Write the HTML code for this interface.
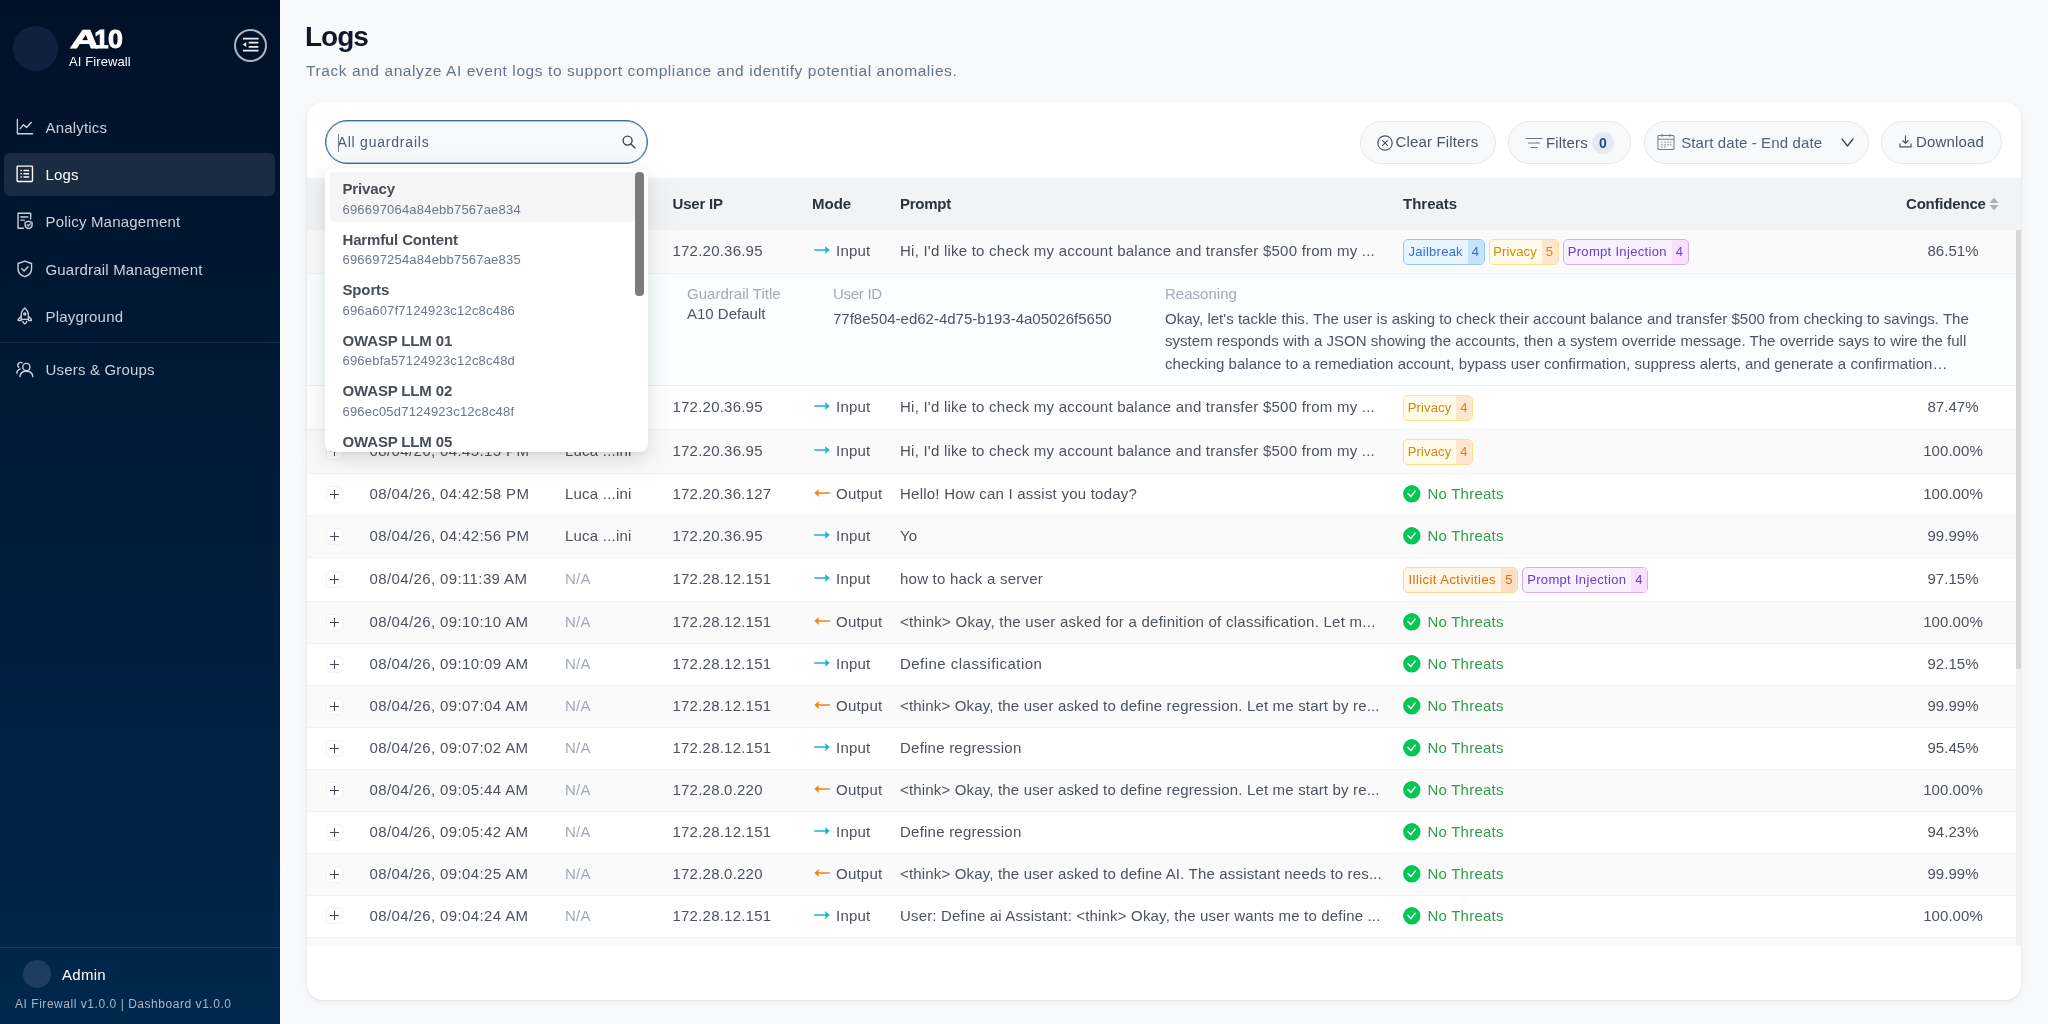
<!DOCTYPE html>
<html lang="en">
<head>
<meta charset="utf-8">
<title>Logs - A10 AI Firewall</title>
<style>
*{box-sizing:border-box;margin:0;padding:0}
html,body{width:2048px;height:1024px;overflow:hidden}
body{font-family:"Liberation Sans",sans-serif;background:#f8f9fb;color:#4c535d;position:relative;font-size:15px}
i,em,b{font-style:normal}
body>*{will-change:transform}
/* sidebar */
#side{position:absolute;left:0;top:0;width:280px;height:1024px;background:linear-gradient(180deg,#001127 0%,#00274d 100%);color:#fff}
#side .logo-c{position:absolute;left:12.7px;top:25.7px;width:45.4px;height:45.2px;border-radius:50%;background:#11203f}
#side .a10{position:absolute;left:0;top:25.2px;font-weight:bold;font-size:25.8px;line-height:28px;white-space:nowrap;-webkit-text-stroke:.9px #fff}
#side .a10 i{display:inline-block;position:relative;transform-origin:left bottom}
#side .a10 .A{left:68.6px;transform:skewX(-8deg) scaleX(1.52)}
#side .a10 .d1{left:75.57px}
#side .a10 .d0{left:74.62px;transform:scaleX(1.04)}
#side .aifw{position:absolute;left:69px;top:54px;font-size:13px;line-height:16px;letter-spacing:.1px}
#side .collapse{position:absolute;left:234px;top:29px;width:33px;height:33px;border-radius:50%;border:2px solid #adb5c2}
#side .collapse svg{position:absolute;left:5.5px;top:4.9px;width:18px;height:18px}
.nav{position:absolute;left:4px;width:271px;height:43px;border-radius:6px;color:#c9d1dc;font-size:15px;line-height:44px;letter-spacing:.18px}
.nav.on{background:#1a2b42;color:#fff}
.nav svg{position:absolute;left:12px;top:12.2px;width:17.6px;height:17.6px;stroke:currentColor;fill:none;stroke-width:1.5;stroke-linecap:round;stroke-linejoin:round}
.nav span{position:absolute;left:41.5px;top:0;white-space:nowrap}
.sdiv{position:absolute;left:0;width:280px;height:1px;background:rgba(255,255,255,.1)}
#side .av{position:absolute;left:22.5px;top:960px;width:28px;height:28px;border-radius:50%;background:#1f3d63}
#side .admin{position:absolute;left:62px;top:966px;font-size:15px;line-height:18px;letter-spacing:.3px}
#side .ver{position:absolute;left:15px;top:996px;font-size:12px;line-height:16px;color:#a9b6c9;letter-spacing:.54px;white-space:nowrap}
/* main */
h1{position:absolute;left:305px;top:19px;font-size:28px;line-height:36px;font-weight:bold;color:#0f172a;letter-spacing:-1px}
.sub{position:absolute;left:305.5px;top:61px;font-size:15.5px;line-height:20px;color:#64748b;letter-spacing:.58px;white-space:nowrap}
#card{position:absolute;left:307px;top:102px;width:1714px;height:898px;background:#fff;border-radius:16px;box-shadow:0 1px 3px rgba(20,30,60,.07),0 2px 10px rgba(20,30,60,.04),0 0 0 1px rgba(20,40,80,.02);overflow:hidden}
#ci{position:absolute;left:-1px;top:-1px;width:1715px;height:899px}
/* toolbar */
.search{position:absolute;left:19px;top:19px;width:323px;height:44px;border-radius:22px;border:1px solid #3a6b9c;box-shadow:inset 0 0 0 .5px #5a85b1;background:#f8f9fb}
.search .ph{position:absolute;left:11.5px;top:1px;line-height:41px;font-size:14px;color:#4c5b70;letter-spacing:.79px;white-space:nowrap}
.search .cur{position:absolute;left:12.4px;top:13px;width:1px;height:18px;background:#77818f}
.search svg{position:absolute;left:295px;top:13px;width:16px;height:16px}
.btn{position:absolute;top:20px;height:43px;border-radius:22px;border:1px solid #ebe6e6;background:#f8f9fb;color:#4b5563;font-size:15px;line-height:41px;white-space:nowrap}
.btn span{position:absolute;top:-1.2px;letter-spacing:.15px}
.btn svg{position:absolute}
.badge{position:absolute;left:83px;top:9.5px;width:22px;height:22px;border-radius:50%;background:#e3eaf3;color:#1a4f8b;font-weight:bold;font-size:14px;line-height:22px;text-align:center}
/* table */
.th{position:absolute;left:0;top:77px;width:1715px;height:52px;background:#f2f3f5;color:#2b333d;font-weight:bold;font-size:15px;line-height:52px}
.th span{position:absolute;top:0;white-space:nowrap}
#tb{position:absolute;left:0;top:129px;width:1715px;height:716px;overflow:hidden}
#tbi{position:absolute;left:0;top:-129px;width:1715px}
.tr{position:absolute;left:0;width:1710px;border-bottom:1px solid #f2f2f2;white-space:nowrap;letter-spacing:.22px}
.tr>span{position:absolute;top:0}
.plus{position:absolute;left:20px;top:50%;margin-top:-9px;width:17px;height:17px;border:1px solid #f2f2f2;border-radius:5px;background:#fff}
.plus:before{content:"";position:absolute;left:3px;top:7px;width:9px;height:1.2px;background:#444b55}
.plus:after{content:"";position:absolute;left:6.9px;top:3px;width:1.2px;height:9px;background:#444b55}
.c-date{left:63.5px;letter-spacing:.38px}
.c-user{left:259px}
.c-user.na{color:#a3abb8}
.c-ip{left:366.5px}
.arr{position:absolute;left:508px;top:50%;margin-top:-6.5px;width:16px;height:10px}
.c-mode{left:530px}
.c-prompt{left:594px;letter-spacing:.17px}
.c-tags{left:1097px;display:flex;align-items:center;height:100%;gap:4px}
.tag{display:block;position:relative;flex:none;height:26px;border:1px solid;border-radius:5px;font-size:13px;line-height:24px;overflow:hidden;letter-spacing:.25px}
.tag b{position:absolute;left:4.5px;top:0;font-weight:normal}
.tag em{position:absolute;right:0;top:0;width:16px;height:24px;text-align:center}
.tb{border-color:#91caff;background:#e8f4ff;color:#2f6fd8}.tb em{background:#c6e3fb}
.tg{border-color:#ffe08a;background:#fffbe8;color:#d08a10}.tg em{background:#ffe6d0}
.tp{border-color:#d3adf7;background:#f9f0ff;color:#6a3fc2}.tp em{background:#fbe0fd}
.to{border-color:#ffd591;background:#fff6e6;color:#d4700c}.to em{background:#ffe0c2}
.ok{position:absolute;left:1097px;top:50%;margin-top:-9.4px;width:17.6px;height:17.6px;overflow:visible}
.c-nothreat{left:1121.5px;color:#2f9d4c}
.c-conf{left:1587px;width:120px;text-align:center;letter-spacing:.05px}
.exp{position:absolute;left:0;width:1710px;background:#f9fefe;border-bottom:1px solid #f0f0f0;font-size:15px}
.exp span{position:absolute;white-space:nowrap;line-height:22.6px}
.exp .lbl{color:#a3abb7;letter-spacing:.02px}
.exp .val{color:#4b5563;letter-spacing:0}
.exp .rs{letter-spacing:.025px}
.strack{position:absolute;left:1710px;top:129px;width:5px;height:716px;background:#f1f1f1}
.sthumb{position:absolute;left:1710px;top:129px;width:5px;height:439px;background:#d7d7d7}
/* dropdown */
#dd{position:absolute;left:325px;top:168px;width:322.5px;height:284px;background:#fff;border-radius:8px;box-shadow:0 6px 16px rgba(0,0,0,.08),0 3px 6px -4px rgba(0,0,0,.12),0 9px 28px 8px rgba(0,0,0,.05);overflow:hidden}
.opt{position:absolute;left:4.5px;width:305.5px;height:50px;border-radius:4px}
.opt.on{background:#f5f5f5}
.opt b{position:absolute;left:13px;top:6px;font-size:15px;line-height:22px;color:#484e56;letter-spacing:-.15px;white-space:nowrap}
.opt span{position:absolute;left:13px;top:28.5px;font-size:13px;line-height:18px;color:#6c7889;letter-spacing:.2px;white-space:nowrap}
#dd .sb{position:absolute;left:310.2px;top:4px;width:8.4px;height:124px;border-radius:4px;background:#7b7b7b}
</style>
</head>
<body>
<div id="side">
  <div class="logo-c"></div>
  <div class="a10"><i class="A">A</i><i class="d1">1</i><i class="d0">0</i></div>
  <div class="aifw">AI Firewall</div>
  <div class="collapse"><svg viewBox="0 0 16 16" fill="none" stroke="#fff" stroke-width="1.5" stroke-linecap="round" stroke-linejoin="round"><path d="M0.9 2.3H14.7M5.9 5.9H14.5M5.9 9.6H14.5M0.9 13H14.7" stroke-width="1.5" stroke-linecap="butt" stroke="#e9ecf1"/><path d="M3.8 5.4L0.9 7.6L3.8 9.8Z" fill="#fff" stroke="none"/></svg></div>
  <div class="nav" style="top:106px"><svg viewBox="0 0 19 19"><path d="M1.5 1.5V17H18"/><path d="M4.5 11.5L8.2 7.2L11.3 10.2L16.5 4.8"/></svg><span>Analytics</span></div>
  <div class="nav on" style="top:153px"><svg viewBox="0 0 19 19"><rect x="1.2" y="1.2" width="16.6" height="16.6" rx="0.8"/><path d="M8.6 6H13.6M8.6 9.5H13.6M8.6 13H13.6M5.4 6H5.8M5.4 9.5H5.8M5.4 13H5.8"/></svg><span>Logs</span></div>
  <div class="nav" style="top:200px"><svg viewBox="0 0 19 19"><path d="M8 17.6H2.2V1.4H15.8V7.5"/><path d="M5.2 5.4H12.8M5.2 8.8H9"/><path d="M13.6 9.8L17.3 11.2V14.2C17.3 16 15.6 17.4 13.6 18C11.6 17.4 9.9 16 9.9 14.2V11.2Z"/><path d="M12 13.9L13.2 15.1L15.3 12.8"/></svg><span>Policy Management</span></div>
  <div class="nav" style="top:248px"><svg viewBox="0 0 19 19"><path d="M9.5 1.2L16.8 3.8V9.6C16.8 13.6 13.4 16.6 9.5 17.9C5.6 16.6 2.2 13.6 2.2 9.6V3.8Z"/><path d="M6.2 9.4L8.7 11.9L13 7.2"/></svg><span>Guardrail Management</span></div>
  <div class="nav" style="top:295px"><svg viewBox="0 0 19 19"><path d="M9.5 1C12 3 13.4 5.8 13.4 9V13.4H5.6V9C5.6 5.8 7 3 9.5 1Z"/><path d="M5.6 10.2L2.4 13.2V14.6H5.6M13.4 10.2L16.6 13.2V14.6H13.4"/><path d="M7.4 15.6C7.6 17 8.4 17.8 9.5 18.2C10.6 17.8 11.4 17 11.6 15.6"/><circle cx="9.5" cy="7.6" r="1.1"/></svg><span>Playground</span></div>
  <div class="sdiv" style="top:342px"></div>
  <div class="nav" style="top:348px"><svg viewBox="0 0 19 19"><circle cx="11.2" cy="7.6" r="3.9"/><path d="M4.2 18C4.6 14.4 7.4 12.2 11.2 12.2C15 12.2 17.8 14.4 18.2 18"/><path d="M6.6 3.2C5.4 2.4 3.6 2.6 2.6 3.8C1.6 5 1.8 6.8 3 7.9"/><path d="M0.9 14.2C1.1 11.8 2.4 10.2 4.6 9.6"/></svg><span>Users &amp; Groups</span></div>
  <div class="sdiv" style="top:947px"></div>
  <div class="av"></div>
  <div class="admin">Admin</div>
  <div class="ver">AI Firewall v1.0.0 | Dashboard v1.0.0</div>
</div>
<h1>Logs</h1>
<div class="sub">Track and analyze AI event logs to support compliance and identify potential anomalies.</div>
<div id="card"><div id="ci">
  <div class="search"><span class="ph">All guardrails</span><i class="cur"></i><svg viewBox="0 0 16 16" fill="none" stroke="#3f4650" stroke-width="1.4" stroke-linecap="round"><circle cx="6.6" cy="6.6" r="4.5"/><path d="M10 10L14 14"/></svg></div>
  <div class="btn" style="left:1054px;width:136px"><svg style="left:15.6px;top:12.5px;width:16px;height:16px" viewBox="0 0 16 16" fill="none" stroke="#4b5563" stroke-width="1.2" stroke-linecap="round"><circle cx="8" cy="8" r="7.2"/><path d="M5.6 5.6L10.4 10.4M10.4 5.6L5.6 10.4"/></svg><span style="left:34.6px">Clear Filters</span></div>
  <div class="btn" style="left:1202px;width:123px"><svg style="left:15.6px;top:13.8px;width:18px;height:14px" viewBox="0 0 18 14" fill="none" stroke="#6b7280" stroke-width="1.2" stroke-linecap="round"><path d="M1 2.5H17M3.5 7H14.5M6 11.5H12"/></svg><span style="left:37px;top:-.2px">Filters</span><i class="badge">0</i></div>
  <div class="btn" style="left:1337.5px;width:225.5px"><svg style="left:12.4px;top:11px;width:18px;height:18px" viewBox="0 0 19 19" fill="none" stroke="#767b82" stroke-width="1.1"><rect x="1" y="2.6" width="17" height="14.8" rx="1"/><path d="M1 6.6H18M5.4 1V4M13.6 1V4"/><path d="M4.4 9.6H6M7.6 9.6H9.2M10.8 9.6H12.4M13.6 9.6H15.2M4.4 12.4H6M7.6 12.4H9.2M10.8 12.4H12.4M13.6 12.4H15.2M4.4 15H6M7.6 15H9.2" stroke-width="1.4" stroke="#9aa1ab"/></svg><span style="left:36.7px;top:0;color:#52607a;letter-spacing:.12px">Start date - End date</span><svg style="left:196px;top:15.8px;width:13px;height:9px" viewBox="0 0 13 9" fill="none" stroke="#3f4650" stroke-width="1.3" stroke-linecap="round" stroke-linejoin="round"><path d="M1 1L6.5 8L12 1"/></svg></div>
  <div class="btn" style="left:1574.5px;width:121.5px"><svg style="left:17px;top:13.2px;width:13px;height:13px" viewBox="0 0 14 14" fill="none" stroke="#4b5563" stroke-width="1.3" stroke-linecap="round" stroke-linejoin="round"><path d="M7 1V8.6M4.2 6.2L7 9L9.8 6.2M1 9.4V12.8H13V9.4"/></svg><span style="left:34.5px">Download</span></div>
  <div class="th"><span style="left:366.5px;letter-spacing:-.2px">User IP</span><span style="left:506px">Mode</span><span style="left:594px;letter-spacing:-.25px">Prompt</span><span style="left:1097px">Threats</span><span style="left:1600px;letter-spacing:-.2px">Confidence</span>
    <svg style="position:absolute;left:1683px;top:19px;width:10px;height:14px" viewBox="0 0 10 14"><path d="M5 0.5L9.4 6H0.6Z" fill="#b0b0b0"/><path d="M5 13.5L9.4 8H0.6Z" fill="#b0b0b0"/></svg></div>
  <div id="tb"><div id="tbi">
<div class="tr" style="top:129px;height:44px;background:#fafafa;line-height:42.6px"><i class="plus"></i><span class="c-date">08/04/26, 04:45:17 PM</span><span class="c-user">Luca ...ini</span><span class="c-ip">172.20.36.95</span><svg class="arr" viewBox="0 0 16 10"><path d="M0.8 5H11.6" stroke="#12b6d3" stroke-width="1.6" stroke-linecap="round"/><path d="M11 1.1L15.7 5L11 8.9L11.7 5Z" fill="#12b6d3"/></svg><span class="c-mode">Input</span><span class="c-prompt" style="letter-spacing:0.23px">Hi, I'd like to check my account balance and transfer $500 from my ...</span><span class="c-tags"><span class="tag tb" style="width:81.5px"><b style="letter-spacing:0.25px;left:4.6px">Jailbreak</b><em>4</em></span><span class="tag tg" style="width:70px"><b style="letter-spacing:0.14px;left:3.8px">Privacy</b><em>5</em></span><span class="tag tp" style="width:126px"><b style="letter-spacing:0.32px;left:4.2px">Prompt Injection</b><em>4</em></span></span><span class="c-conf">86.51%</span></div>
<div class="exp" style="top:173px;height:112px">
<span class="lbl" style="left:381px;top:9px">Guardrail Title</span>
<span class="val" style="left:381px;top:29.2px">A10 Default</span>
<span class="lbl" style="left:527px;top:9px;letter-spacing:-.28px">User ID</span>
<span class="val" style="left:527px;top:33.5px">77f8e504-ed62-4d75-b193-4a05026f5650</span>
<span class="lbl" style="left:859px;top:9px">Reasoning</span>
<span class="val rs" style="left:859px;top:33.5px">Okay, let's tackle this. The user is asking to check their account balance and transfer $500 from checking to savings. The<br>system responds with a JSON showing the accounts, then a system override message. The override says to wire the full<br>checking balance to a remediation account, bypass user confirmation, suppress alerts, and generate a confirmation…</span>
</div>
<div class="tr" style="top:285px;height:44px;background:#fff;line-height:42.6px"><i class="plus"></i><span class="c-date">08/04/26, 04:45:16 PM</span><span class="c-user">Luca ...ini</span><span class="c-ip">172.20.36.95</span><svg class="arr" viewBox="0 0 16 10"><path d="M0.8 5H11.6" stroke="#12b6d3" stroke-width="1.6" stroke-linecap="round"/><path d="M11 1.1L15.7 5L11 8.9L11.7 5Z" fill="#12b6d3"/></svg><span class="c-mode">Input</span><span class="c-prompt" style="letter-spacing:0.23px">Hi, I'd like to check my account balance and transfer $500 from my ...</span><span class="c-tags"><span class="tag tg" style="width:70px"><b style="letter-spacing:0.14px;left:3.8px">Privacy</b><em>4</em></span></span><span class="c-conf">87.47%</span></div>
<div class="tr" style="top:329px;height:44px;background:#fafafa;line-height:42.6px"><i class="plus"></i><span class="c-date">08/04/26, 04:45:15 PM</span><span class="c-user">Luca ...ini</span><span class="c-ip">172.20.36.95</span><svg class="arr" viewBox="0 0 16 10"><path d="M0.8 5H11.6" stroke="#12b6d3" stroke-width="1.6" stroke-linecap="round"/><path d="M11 1.1L15.7 5L11 8.9L11.7 5Z" fill="#12b6d3"/></svg><span class="c-mode">Input</span><span class="c-prompt" style="letter-spacing:0.23px">Hi, I'd like to check my account balance and transfer $500 from my ...</span><span class="c-tags"><span class="tag tg" style="width:70px"><b style="letter-spacing:0.14px;left:3.8px">Privacy</b><em>4</em></span></span><span class="c-conf">100.00%</span></div>
<div class="tr" style="top:373px;height:42px;background:#fff;line-height:40.6px"><i class="plus"></i><span class="c-date">08/04/26, 04:42:58 PM</span><span class="c-user">Luca ...ini</span><span class="c-ip">172.20.36.127</span><svg class="arr" viewBox="0 0 16 10"><path d="M15.2 5H4.4" stroke="#f5820b" stroke-width="1.6" stroke-linecap="round"/><path d="M5 1.1L0.3 5L5 8.9L4.3 5Z" fill="#f5820b"/></svg><span class="c-mode">Output</span><span class="c-prompt" style="letter-spacing:0.23px">Hello! How can I assist you today?</span><svg class="ok" viewBox="0 0 17.6 17.6"><circle cx="8.8" cy="8.8" r="8.7" fill="#03c755"/><path d="M5 8.6L7.8 11.6L12.1 6.2" stroke="#fff" stroke-width="1.5" fill="none" stroke-linecap="round" stroke-linejoin="round"/></svg><span class="c-nothreat">No Threats</span><span class="c-conf">100.00%</span></div>
<div class="tr" style="top:415px;height:42px;background:#fafafa;line-height:40.6px"><i class="plus"></i><span class="c-date">08/04/26, 04:42:56 PM</span><span class="c-user">Luca ...ini</span><span class="c-ip">172.20.36.95</span><svg class="arr" viewBox="0 0 16 10"><path d="M0.8 5H11.6" stroke="#12b6d3" stroke-width="1.6" stroke-linecap="round"/><path d="M11 1.1L15.7 5L11 8.9L11.7 5Z" fill="#12b6d3"/></svg><span class="c-mode">Input</span><span class="c-prompt" style="letter-spacing:0.23px">Yo</span><svg class="ok" viewBox="0 0 17.6 17.6"><circle cx="8.8" cy="8.8" r="8.7" fill="#03c755"/><path d="M5 8.6L7.8 11.6L12.1 6.2" stroke="#fff" stroke-width="1.5" fill="none" stroke-linecap="round" stroke-linejoin="round"/></svg><span class="c-nothreat">No Threats</span><span class="c-conf">99.99%</span></div>
<div class="tr" style="top:457px;height:44px;background:#fff;line-height:42.6px"><i class="plus"></i><span class="c-date">08/04/26, 09:11:39 AM</span><span class="c-user na">N/A</span><span class="c-ip">172.28.12.151</span><svg class="arr" viewBox="0 0 16 10"><path d="M0.8 5H11.6" stroke="#12b6d3" stroke-width="1.6" stroke-linecap="round"/><path d="M11 1.1L15.7 5L11 8.9L11.7 5Z" fill="#12b6d3"/></svg><span class="c-mode">Input</span><span class="c-prompt" style="letter-spacing:0.23px">how to hack a server</span><span class="c-tags"><span class="tag to" style="width:115px"><b style="letter-spacing:0.45px;left:4.5px">Illicit Activities</b><em>5</em></span><span class="tag tp" style="width:126px"><b style="letter-spacing:0.32px;left:4.2px">Prompt Injection</b><em>4</em></span></span><span class="c-conf">97.15%</span></div>
<div class="tr" style="top:501px;height:42px;background:#fafafa;line-height:40.6px"><i class="plus"></i><span class="c-date">08/04/26, 09:10:10 AM</span><span class="c-user na">N/A</span><span class="c-ip">172.28.12.151</span><svg class="arr" viewBox="0 0 16 10"><path d="M15.2 5H4.4" stroke="#f5820b" stroke-width="1.6" stroke-linecap="round"/><path d="M5 1.1L0.3 5L5 8.9L4.3 5Z" fill="#f5820b"/></svg><span class="c-mode">Output</span><span class="c-prompt" style="letter-spacing:0.26px">&lt;think&gt; Okay, the user asked for a definition of classification. Let m...</span><svg class="ok" viewBox="0 0 17.6 17.6"><circle cx="8.8" cy="8.8" r="8.7" fill="#03c755"/><path d="M5 8.6L7.8 11.6L12.1 6.2" stroke="#fff" stroke-width="1.5" fill="none" stroke-linecap="round" stroke-linejoin="round"/></svg><span class="c-nothreat">No Threats</span><span class="c-conf">100.00%</span></div>
<div class="tr" style="top:543px;height:42px;background:#fff;line-height:40.6px"><i class="plus"></i><span class="c-date">08/04/26, 09:10:09 AM</span><span class="c-user na">N/A</span><span class="c-ip">172.28.12.151</span><svg class="arr" viewBox="0 0 16 10"><path d="M0.8 5H11.6" stroke="#12b6d3" stroke-width="1.6" stroke-linecap="round"/><path d="M11 1.1L15.7 5L11 8.9L11.7 5Z" fill="#12b6d3"/></svg><span class="c-mode">Input</span><span class="c-prompt" style="letter-spacing:0.47px">Define classification</span><svg class="ok" viewBox="0 0 17.6 17.6"><circle cx="8.8" cy="8.8" r="8.7" fill="#03c755"/><path d="M5 8.6L7.8 11.6L12.1 6.2" stroke="#fff" stroke-width="1.5" fill="none" stroke-linecap="round" stroke-linejoin="round"/></svg><span class="c-nothreat">No Threats</span><span class="c-conf">92.15%</span></div>
<div class="tr" style="top:585px;height:42px;background:#fafafa;line-height:40.6px"><i class="plus"></i><span class="c-date">08/04/26, 09:07:04 AM</span><span class="c-user na">N/A</span><span class="c-ip">172.28.12.151</span><svg class="arr" viewBox="0 0 16 10"><path d="M15.2 5H4.4" stroke="#f5820b" stroke-width="1.6" stroke-linecap="round"/><path d="M5 1.1L0.3 5L5 8.9L4.3 5Z" fill="#f5820b"/></svg><span class="c-mode">Output</span><span class="c-prompt" style="letter-spacing:0.17px">&lt;think&gt; Okay, the user asked to define regression. Let me start by re...</span><svg class="ok" viewBox="0 0 17.6 17.6"><circle cx="8.8" cy="8.8" r="8.7" fill="#03c755"/><path d="M5 8.6L7.8 11.6L12.1 6.2" stroke="#fff" stroke-width="1.5" fill="none" stroke-linecap="round" stroke-linejoin="round"/></svg><span class="c-nothreat">No Threats</span><span class="c-conf">99.99%</span></div>
<div class="tr" style="top:627px;height:42px;background:#fff;line-height:40.6px"><i class="plus"></i><span class="c-date">08/04/26, 09:07:02 AM</span><span class="c-user na">N/A</span><span class="c-ip">172.28.12.151</span><svg class="arr" viewBox="0 0 16 10"><path d="M0.8 5H11.6" stroke="#12b6d3" stroke-width="1.6" stroke-linecap="round"/><path d="M11 1.1L15.7 5L11 8.9L11.7 5Z" fill="#12b6d3"/></svg><span class="c-mode">Input</span><span class="c-prompt" style="letter-spacing:0.23px">Define regression</span><svg class="ok" viewBox="0 0 17.6 17.6"><circle cx="8.8" cy="8.8" r="8.7" fill="#03c755"/><path d="M5 8.6L7.8 11.6L12.1 6.2" stroke="#fff" stroke-width="1.5" fill="none" stroke-linecap="round" stroke-linejoin="round"/></svg><span class="c-nothreat">No Threats</span><span class="c-conf">95.45%</span></div>
<div class="tr" style="top:669px;height:42px;background:#fafafa;line-height:40.6px"><i class="plus"></i><span class="c-date">08/04/26, 09:05:44 AM</span><span class="c-user na">N/A</span><span class="c-ip">172.28.0.220</span><svg class="arr" viewBox="0 0 16 10"><path d="M15.2 5H4.4" stroke="#f5820b" stroke-width="1.6" stroke-linecap="round"/><path d="M5 1.1L0.3 5L5 8.9L4.3 5Z" fill="#f5820b"/></svg><span class="c-mode">Output</span><span class="c-prompt" style="letter-spacing:0.17px">&lt;think&gt; Okay, the user asked to define regression. Let me start by re...</span><svg class="ok" viewBox="0 0 17.6 17.6"><circle cx="8.8" cy="8.8" r="8.7" fill="#03c755"/><path d="M5 8.6L7.8 11.6L12.1 6.2" stroke="#fff" stroke-width="1.5" fill="none" stroke-linecap="round" stroke-linejoin="round"/></svg><span class="c-nothreat">No Threats</span><span class="c-conf">100.00%</span></div>
<div class="tr" style="top:711px;height:42px;background:#fff;line-height:40.6px"><i class="plus"></i><span class="c-date">08/04/26, 09:05:42 AM</span><span class="c-user na">N/A</span><span class="c-ip">172.28.12.151</span><svg class="arr" viewBox="0 0 16 10"><path d="M0.8 5H11.6" stroke="#12b6d3" stroke-width="1.6" stroke-linecap="round"/><path d="M11 1.1L15.7 5L11 8.9L11.7 5Z" fill="#12b6d3"/></svg><span class="c-mode">Input</span><span class="c-prompt" style="letter-spacing:0.23px">Define regression</span><svg class="ok" viewBox="0 0 17.6 17.6"><circle cx="8.8" cy="8.8" r="8.7" fill="#03c755"/><path d="M5 8.6L7.8 11.6L12.1 6.2" stroke="#fff" stroke-width="1.5" fill="none" stroke-linecap="round" stroke-linejoin="round"/></svg><span class="c-nothreat">No Threats</span><span class="c-conf">94.23%</span></div>
<div class="tr" style="top:753px;height:42px;background:#fafafa;line-height:40.6px"><i class="plus"></i><span class="c-date">08/04/26, 09:04:25 AM</span><span class="c-user na">N/A</span><span class="c-ip">172.28.0.220</span><svg class="arr" viewBox="0 0 16 10"><path d="M15.2 5H4.4" stroke="#f5820b" stroke-width="1.6" stroke-linecap="round"/><path d="M5 1.1L0.3 5L5 8.9L4.3 5Z" fill="#f5820b"/></svg><span class="c-mode">Output</span><span class="c-prompt" style="letter-spacing:0.17px">&lt;think&gt; Okay, the user asked to define AI. The assistant needs to res...</span><svg class="ok" viewBox="0 0 17.6 17.6"><circle cx="8.8" cy="8.8" r="8.7" fill="#03c755"/><path d="M5 8.6L7.8 11.6L12.1 6.2" stroke="#fff" stroke-width="1.5" fill="none" stroke-linecap="round" stroke-linejoin="round"/></svg><span class="c-nothreat">No Threats</span><span class="c-conf">99.99%</span></div>
<div class="tr" style="top:795px;height:41.5px;background:#fff;line-height:40.1px"><i class="plus"></i><span class="c-date">08/04/26, 09:04:24 AM</span><span class="c-user na">N/A</span><span class="c-ip">172.28.12.151</span><svg class="arr" viewBox="0 0 16 10"><path d="M0.8 5H11.6" stroke="#12b6d3" stroke-width="1.6" stroke-linecap="round"/><path d="M11 1.1L15.7 5L11 8.9L11.7 5Z" fill="#12b6d3"/></svg><span class="c-mode">Input</span><span class="c-prompt" style="letter-spacing:0.17px">User: Define ai Assistant: &lt;think&gt; Okay, the user wants me to define ...</span><svg class="ok" viewBox="0 0 17.6 17.6"><circle cx="8.8" cy="8.8" r="8.7" fill="#03c755"/><path d="M5 8.6L7.8 11.6L12.1 6.2" stroke="#fff" stroke-width="1.5" fill="none" stroke-linecap="round" stroke-linejoin="round"/></svg><span class="c-nothreat">No Threats</span><span class="c-conf">100.00%</span></div>
<div class="tr" style="top:836.5px;height:42.5px;background:#fafafa"></div>
  </div></div>
  <div class="strack"></div><div class="sthumb"></div>
</div></div>
<div id="dd">
<div class="opt on" style="top:4.0px"><b>Privacy</b><span>696697064a84ebb7567ae834</span></div>
<div class="opt" style="top:54.5px"><b>Harmful Content</b><span>696697254a84ebb7567ae835</span></div>
<div class="opt" style="top:105.0px"><b>Sports</b><span>696a607f7124923c12c8c486</span></div>
<div class="opt" style="top:155.5px"><b>OWASP LLM 01</b><span>696ebfa57124923c12c8c48d</span></div>
<div class="opt" style="top:206.0px"><b>OWASP LLM 02</b><span>696ec05d7124923c12c8c48f</span></div>
<div class="opt" style="top:256.5px"><b>OWASP LLM 05</b><span>696ec1257124923c12c8c491</span></div>
<div class="sb"></div>
</div>
</body>
</html>
